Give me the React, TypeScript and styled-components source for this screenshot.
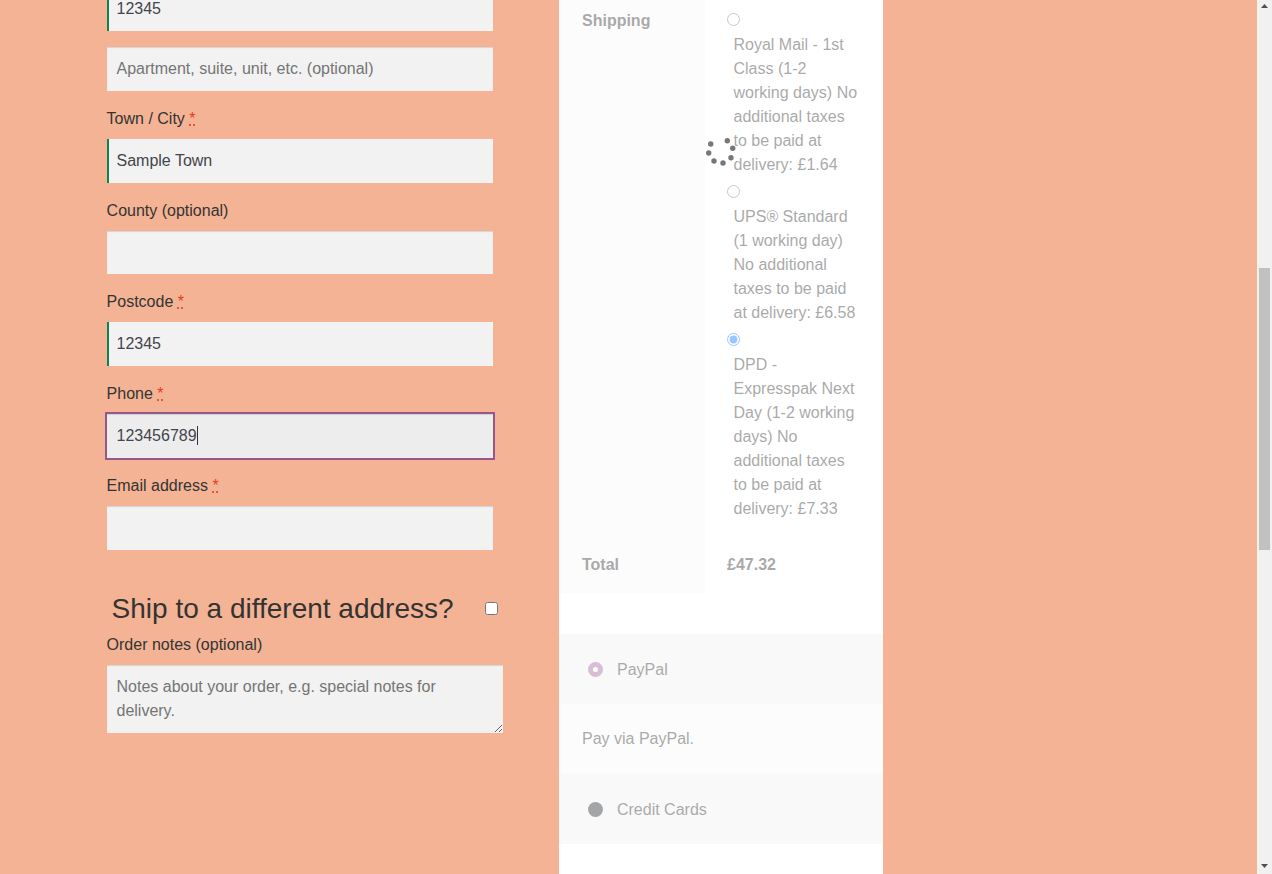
import styled, { createGlobalStyle } from "styled-components";

const GlobalStyle = createGlobalStyle`
  html, body {
    margin: 0;
    padding: 0;
    height: 100%;
    overflow: hidden;
  }
  body {
    font-family: "Liberation Sans", Arial, sans-serif;
    font-size: 16px;
    line-height: 24px;
    color: #333;
    background: #f4b395;
  }
`;

const Page = styled.div`
  display: flex;
  height: 874px;
  overflow: hidden;
`;

const Main = styled.main`
  flex: 1;
  display: flex;
  align-items: stretch;
  padding-left: 106.6px;
  background: #f4b395;
`;

const BillingColumn = styled.form`
  width: 396px;
  margin-top: -13px;
  margin-right: 56.4px;
  display: flex;
  flex-direction: column;
`;

const Label = styled.label`
  display: block;
  margin: 16px 0 8px;
  height: 24px;
  color: #333;
`;

const Required = styled.abbr`
  color: #e2401c;
  text-decoration: underline dotted;
  cursor: help;
`;

const Input = styled.input<{ $valid?: boolean; $height?: number }>`
  display: block;
  box-sizing: border-box;
  width: 386px;
  height: ${(p) => p.$height ?? 44}px;
  padding: 9px 9.9px;
  border: 0;
  border-radius: 0;
  background: #f2f2f2;
  color: #43454b;
  font: 16px/24px "Liberation Sans", Arial, sans-serif;
  outline: none;
  box-shadow: ${(p) => (p.$valid ? "inset 2px 0 0 #0f834d" : "inset 0 1px 1px rgba(0, 0, 0, 0.125)")};

  &::placeholder {
    color: #757575;
    opacity: 1;
  }
`;

const AddressLine = styled(Input)`
  margin-top: 16px;
`;

const FocusedField = styled.div`
  position: relative;
  width: 386px;
`;

const FocusedInput = styled(Input)`
  background: #ededed;
  outline: 2px solid #96588a;
  caret-color: transparent;
`;

const Caret = styled.span`
  position: absolute;
  left: 90px;
  top: 12px;
  width: 1px;
  height: 19px;
  background: #333;
`;

const ShipRow = styled.div`
  display: flex;
  align-items: center;
  justify-content: space-between;
  height: 48px;
  margin-top: 34px;
  padding: 0 5px;
`;

const ShipHeading = styled.h3`
  margin: 2px 0 0;
  font-size: 28px;
  font-weight: 400;
  line-height: 48px;
  color: #333;
`;

const ShipCheckbox = styled.input`
  margin: 0;
  width: 13px;
  height: 13px;
`;

const NotesLabel = styled(Label)`
  margin: 1px 0 8px;
`;

const Notes = styled.textarea`
  display: block;
  box-sizing: border-box;
  width: 396px;
  height: 68px;
  padding: 10px 9.9px 9px;
  border: 0;
  background: #f2f2f2;
  color: #43454b;
  font: 16px/24px "Liberation Sans", Arial, sans-serif;
  outline: none;
  box-shadow: inset 0 1px 1px rgba(0, 0, 0, 0.125);

  &::placeholder {
    color: #757575;
    opacity: 1;
  }
`;

const OrderPanel = styled.section`
  position: relative;
  width: 324px;
  background: #fff;
`;

// the order review is dimmed while it reloads
const OrderContent = styled.div`
  opacity: 0.4;
  color: #2a2a2a;
`;

const Totals = styled.div`
  display: grid;
  grid-template-columns: 146px 178px;
`;

const HeadCell = styled.div<{ $top: number; $bottom: number }>`
  padding: ${(p) => p.$top}px 0 ${(p) => p.$bottom}px 23px;
  background: #f8f8f8;
  font-weight: 700;
`;

const ShippingCell = styled.div`
  padding: 5px 22px 15px;
`;

const TotalCell = styled.div`
  padding: 17px 22px 16px;
  font-weight: 700;
`;

const ShippingOption = styled.div`
  display: flex;
  flex-direction: column;
`;

const OptionRadio = styled.input`
  display: block;
  width: 13px;
  height: 13px;
  margin: 8px 0 7px;
`;

const OptionLabel = styled.label`
  display: block;
  width: 127px;
  margin-left: 6.5px;
`;

const Payments = styled.div`
  margin-top: 41px;
`;

const PaymentRow = styled.div<{ $shade?: boolean }>`
  display: flex;
  align-items: center;
  gap: 14px;
  height: 70px;
  padding-left: ${(p) => (p.$shade ? "29px" : "23px")};
  background: ${(p) => (p.$shade ? "#f2f2f2" : "#f8f8f8")};
`;

const PaymentDot = styled.span<{ $selected?: boolean }>`
  box-sizing: border-box;
  width: 15px;
  height: 15px;
  border-radius: 50%;
  background: ${(p) => (p.$selected ? "#fff" : "#1f2125")};
  border: ${(p) => (p.$selected ? "5px solid #a05c96" : "0")};
`;

const PaymentName = styled.span`
  margin-top: 2px;
`;

const Spinner = styled.svg`
  position: absolute;
  left: 146px;
  top: 136px;
  width: 32px;
  height: 32px;
`;

const Scrollbar = styled.div`
  width: 15px;
  display: flex;
  flex-direction: column;
  background: #f1f1f1;
`;

const ScrollArrow = styled.svg`
  display: block;
  width: 15px;
  height: 17px;
  flex: none;
`;

const ScrollTrack = styled.div`
  flex: 1;
  padding: 251px 2px 0;
`;

const ScrollThumb = styled.div`
  height: 282px;
  background: #c1c1c1;
`;

const shippingOptions = [
  { id: "royal", text: "Royal Mail - 1st Class (1-2 working days) No additional taxes to be paid at delivery: £1.64" },
  { id: "ups", text: "UPS® Standard (1 working day) No additional taxes to be paid at delivery: £6.58" },
  { id: "dpd", text: "DPD - Expresspak Next Day (1-2 working days) No additional taxes to be paid at delivery: £7.33", checked: true },
];

const spinnerDots = [
  [5.7, 8],
  [3.7, 17],
  [9, 25],
  [18, 27],
  [26, 21.7],
  [27.7, 12.3],
  [22.3, 4.7],
];

function Star() {
  return <Required title="required">*</Required>;
}

export default function App() {
  return (
    <Page>
      <GlobalStyle />
      <Main>
        <BillingColumn>
          <Input $valid readOnly value="12345" />
          <AddressLine placeholder="Apartment, suite, unit, etc. (optional)" />

          <Label>Town / City <Star /></Label>
          <Input $valid readOnly value="Sample Town" />

          <Label>County (optional)</Label>
          <Input $height={43} />

          <Label>Postcode <Star /></Label>
          <Input $valid readOnly value="12345" />

          <Label>Phone <Star /></Label>
          <FocusedField>
            <FocusedInput readOnly value="123456789" />
            <Caret />
          </FocusedField>

          <Label>Email address <Star /></Label>
          <Input />

          <ShipRow>
            <ShipHeading>Ship to a different address?</ShipHeading>
            <ShipCheckbox type="checkbox" />
          </ShipRow>

          <NotesLabel>Order notes (optional)</NotesLabel>
          <Notes placeholder="Notes about your order, e.g. special notes for delivery." />
        </BillingColumn>

        <OrderPanel>
          <OrderContent>
            <Totals>
              <HeadCell $top={9} $bottom={15}>Shipping</HeadCell>
              <ShippingCell>
                {shippingOptions.map((opt) => (
                  <ShippingOption key={opt.id}>
                    <OptionRadio type="radio" name="shipping" id={opt.id} defaultChecked={opt.checked} />
                    <OptionLabel htmlFor={opt.id}>{opt.text}</OptionLabel>
                  </ShippingOption>
                ))}
              </ShippingCell>
              <HeadCell $top={17} $bottom={16}>Total</HeadCell>
              <TotalCell>£47.32</TotalCell>
            </Totals>

            <Payments>
              <PaymentRow $shade>
                <PaymentDot $selected />
                <PaymentName>PayPal</PaymentName>
              </PaymentRow>
              <PaymentRow>Pay via PayPal.</PaymentRow>
              <PaymentRow $shade>
                <PaymentDot />
                <PaymentName>Credit Cards</PaymentName>
              </PaymentRow>
            </Payments>
          </OrderContent>

          <Spinner viewBox="0 0 32 32">
            {spinnerDots.map(([cx, cy]) => (
              <circle key={`${cx}-${cy}`} cx={cx} cy={cy} r="2.7" fill="#777" />
            ))}
          </Spinner>
        </OrderPanel>
      </Main>

      <Scrollbar>
        <ScrollArrow viewBox="0 0 15 17">
          <path d="M7.5 4 L11 8 H4 Z" fill="#505050" />
        </ScrollArrow>
        <ScrollTrack>
          <ScrollThumb />
        </ScrollTrack>
        <ScrollArrow viewBox="0 0 15 17">
          <path d="M4 7 H11 L7.5 11 Z" fill="#505050" />
        </ScrollArrow>
      </Scrollbar>
    </Page>
  );
}
